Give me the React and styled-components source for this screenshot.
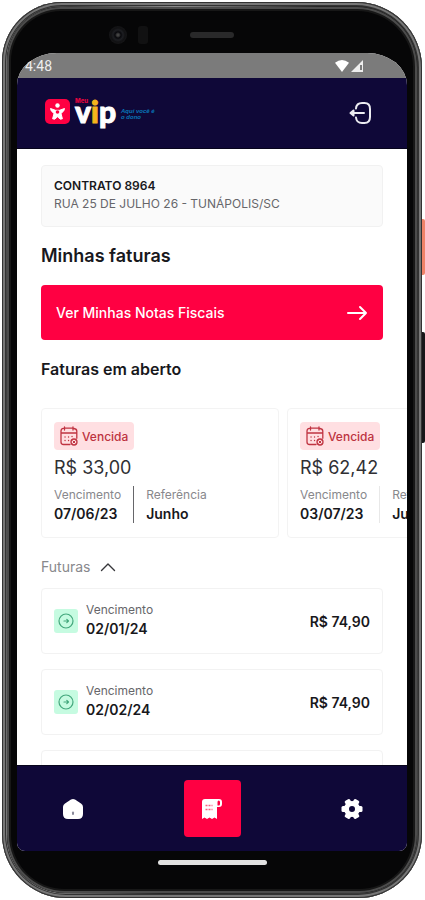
import React from "react";
import styled, { createGlobalStyle } from "styled-components";

const Global = createGlobalStyle`
  *, *::before, *::after { box-sizing: border-box; }
  body { margin: 0; background: #fff; font-family: Inter, "Liberation Sans", sans-serif; color: #18181c; }
  button { font: inherit; color: inherit; border: 0; padding: 0; background: none; cursor: pointer; }
  h1, h2, p, dl, dd, dt, ul { margin: 0; padding: 0; }
  svg { display: block; flex: none; }
`;

const Stage = styled.main`
  position: relative;
  height: 100vh;
  padding: 2px 3px 2px 2px;
`;

const SideKey = styled.span`
  position: absolute;
  right: 0;
  top: ${(p) => p.$top}px;
  width: 6px;
  height: ${(p) => p.$length}px;
  border-radius: 2px;
  background: ${(p) => p.$color};
`;

const Shell = styled.div`
  position: relative;
  height: 100%;
  padding: 5px;
  border-radius: 60px 66px 64px 64px;
  background: linear-gradient(100deg, #777 0, #3a3a3a 12%, #8a8a8a 30%, #252525 55%, #333 80%, #444 100%);
  box-shadow: inset 0 0 0 1px #333, inset 0 0 0 3px #777, inset 0 0 0 4px #333;
`;

const Bezel = styled.div`
  display: flex;
  flex-direction: column;
  height: 100%;
  padding: 0 8px;
  border-radius: 54px 60px 58px 58px;
  background: #060607;
  box-shadow: inset 0 0 0 2px #4c4c4c, inset 0 0 0 4px #171717;
`;

const TopBezel = styled.div`
  display: grid;
  grid-template-columns: 1fr 44px 1fr;
  align-items: center;
  height: 46px;
  flex: none;
  padding-top: 10px;
`;

const Sensors = styled.div`
  display: flex;
  justify-content: flex-end;
  gap: 11px;
  padding-right: 42px;
`;

const Camera = styled.span`
  width: 18px;
  height: 18px;
  border-radius: 50%;
  background: radial-gradient(circle, #444 0 1px, #08080c 3px, #1d1e22 5px, #111113 7px, #151517 9px);
`;

const Proximity = styled.span`
  width: 10px;
  height: 18px;
  border-radius: 3px;
  background: #111112;
`;

const Speaker = styled.span`
  height: 6px;
  border-radius: 3px;
  background: #29292a;
`;

const Screen = styled.div`
  display: flex;
  flex-direction: column;
  flex: 1;
  min-height: 0;
  margin: 0 2px;
  overflow: hidden;
  border-radius: 40px 40px 8px 8px / 32px 32px 8px 8px;
  background: #fff;
`;

const StatusBar = styled.div`
  display: flex;
  align-items: center;
  justify-content: space-between;
  flex: none;
  height: 25px;
  padding: 0 42px 0 8px;
  background: #7b7b7b;
  color: #eee;
  font: 14px/24px Roboto, sans-serif;
`;

const AppHeader = styled.header`
  display: flex;
  align-items: center;
  justify-content: space-between;
  flex: none;
  height: 71px;
  padding: 0 34px 0 28px;
  background: #0f0838;
  border-bottom: 1px solid #07041c;
`;

const Content = styled.div`
  flex: 1;
  min-height: 0;
  padding: 16px 24px 0 24px;
  overflow: hidden;
`;

const Contract = styled.section`
  padding: 11px 12px 13px;
  border: 1px solid #f1f1f1;
  border-radius: 4px;
  background: #fafafa;
  font-size: 12px;
  line-height: 18px;
  color: #66666a;
`;

const ContractTitle = styled.p`
  font-weight: 600;
  color: #18181c;
`;

const PageTitle = styled.h1`
  margin-top: 18px;
  font-size: 18px;
  line-height: 22px;
  font-weight: 600;
`;

const SectionTitle = styled.h2`
  margin-top: 19px;
  font-size: 16px;
  line-height: 20px;
  font-weight: 600;
`;

const NotesButton = styled.button`
  display: flex;
  align-items: center;
  justify-content: space-between;
  width: 100%;
  height: 55px;
  margin-top: 18px;
  padding: 0 15px;
  border-radius: 4px;
  background: #ff0042;
  color: #fff;
  font-size: 14px;
  font-weight: 500;
`;

const OpenBills = styled.div`
  display: flex;
  gap: 8px;
  margin: 29px -24px 0 0;
  overflow: hidden;
`;

const BillCard = styled.article`
  flex: none;
  width: 238px;
  padding: 13px 12px 14px;
  border: 1px solid #f3f3f3;
  border-radius: 4px;
`;

const OverdueTag = styled.span`
  display: flex;
  width: fit-content;
  align-items: center;
  gap: 4px;
  height: 28px;
  padding: 0 6px;
  border-radius: 4px;
  background: #ffdfe2;
  color: #bd3340;
  font-size: 12px;
  font-weight: 500;
`;

const Amount = styled.p`
  margin-top: 6px;
  font-size: 18px;
  line-height: 24px;
  color: #303034;
`;

const Facts = styled.dl`
  display: flex;
  margin-top: 6px;
`;

const Fact = styled.div`
  padding-right: 12px;
`;

const RuledFact = styled(Fact)`
  padding-left: 12px;
  border-left: 1px solid ${(p) => p.$rule};
`;

const Label = styled.dt`
  font-size: 12px;
  line-height: 18px;
  color: ${(p) => (p.$strong ? "#66666a" : "#88888c")};
`;

const Value = styled.dd`
  font-size: 14px;
  line-height: 19px;
  font-weight: 600;
`;

const FutureToggle = styled.button`
  display: flex;
  align-items: center;
  gap: 10px;
  margin-top: 19px;
  font-size: 14px;
  line-height: 20px;
  color: #88888c;
`;

const FutureList = styled.ul`
  display: grid;
  gap: 15px;
  margin-top: 11px;
  list-style: none;
`;

const FutureRow = styled.li`
  display: flex;
  align-items: center;
  gap: 8px;
  height: 66px;
  padding: 0 12px;
  border: 1px solid #f2f2f2;
  border-radius: 4px;
`;

const FutureFact = styled.dl`
  padding-bottom: 4px;
`;

const FutureIcon = styled.span`
  display: grid;
  place-items: center;
  width: 24px;
  height: 24px;
  border-radius: 3px;
  background: #c6fbe1;
`;

const FuturePrice = styled.span`
  margin-left: auto;
  font-size: 14px;
  font-weight: 600;
`;

const NavBar = styled.nav`
  display: flex;
  align-items: center;
  justify-content: space-between;
  flex: none;
  height: 86px;
  padding: 0 27px;
  background: #0f0838;
  border-top: 1px solid #07041c;
`;

const NavButton = styled.button`
  display: grid;
  place-items: center;
  width: 57px;
  height: 57px;
  border-radius: 4px;
  background: ${(p) => (p.$active ? "#ff0042" : "transparent")};
`;

const BottomBezel = styled.div`
  display: flex;
  justify-content: center;
  flex: none;
  height: 42px;
  padding-top: 9px;
`;

const HomeIndicator = styled.span`
  width: 109px;
  height: 5px;
  border-radius: 3px;
  background: #e2e2e2;
`;

const Logo = () => (
  <svg width="120" height="48" viewBox="0 -8 120 48" role="img" aria-label="Meu vip">
    <rect x="0" y="2" width="25" height="25" rx="5" fill="#ff0042" />
    <circle cx="12.5" cy="8.5" r="2.2" fill="#fff" />
    <path d="M5.500 11.500l5 1.800h4l5-1.800-.8 2.500-2.700 2.500 1.400 5.300-2 .4-2.900-2.400-2.900 2.400-2-.4 1.400-5.300-2.700-2.500z" fill="#fff" stroke="#fff" strokeWidth="1" strokeLinejoin="round" />
    <circle cx="12.500" cy="15" r="1.800" fill="#ff0042" />
    <g fontFamily="Lato, sans-serif" fontWeight="900" fontSize="30" strokeWidth="1">
      <text x="30" y="26" fill="#fff" stroke="#fff">v</text>
      <text x="46" y="26" fill="#f6b51c" stroke="#f6b51c">i</text>
      <text x="54" y="26" fill="#fff" stroke="#fff">p</text>
    </g>
    <text x="30" y="6" fontFamily="Inter, sans-serif" fontWeight="800" fontSize="6" fill="#e3063f">Meu</text>
    <g fontFamily="Liberation Sans, sans-serif" fontStyle="italic" fontWeight="700" fontSize="6" fill="#0877b9">
      <text x="76" y="16">Aqui você é</text>
      <text x="76" y="22">o dono</text>
    </g>
  </svg>
);

const Signal = () => (
  <svg width="31" height="14" viewBox="0 0 31 14" fill="#fff" aria-hidden="true">
    <path d="M1 3.800Q8 -1.800 15 3.800L8 13z" />
    <path d="M17 13L29 1v12z" fill="#eee" />
    <path d="M26 6h2v5h-2z" fill="#7b7b7b" />
  </svg>
);

const LogoutIcon = () => (
  <svg width="24" height="24" viewBox="0 0 24 24" fill="none" stroke="#ececf1" strokeWidth="2" strokeLinecap="round" strokeLinejoin="round" aria-hidden="true">
    <path d="M7 7.500Q7.500 2 13 2h2.500q5.500 0 5.500 6v8q0 6-5.500 6H13q-5.500 0-6-5.500M15 12H4" />
    <path d="M4.500 9.500L1.500 12l3 2.500z" fill="#ececf1" />
  </svg>
);

const ArrowIcon = () => (
  <svg width="22" height="18" viewBox="0 0 22 18" fill="none" stroke="#fff" strokeWidth="2" strokeLinecap="round" strokeLinejoin="round" aria-hidden="true">
    <path d="M2 9h18M14 3l6 6-6 6" />
  </svg>
);

const CalendarIcon = () => (
  <svg width="18" height="20" viewBox="0 0 18 20" fill="none" stroke="#c03442" strokeWidth="1.300" strokeLinecap="round" strokeLinejoin="round" aria-hidden="true">
    <path d="M4.500 1v3M13 1v3M5 2.200h7.500M3.500 2.400Q1 2.700 1 5v11q0 2.500 2.500 2.500H10M14 2.500q2.800.4 2.800 2.800v7M1 7h15.800" />
    <path d="M5 11h.1M8.500 11h.1M5 14.500h.1M8.500 14.500h.1M12 10.500h.1" />
    <circle cx="14" cy="16" r="3" />
    <path d="M12.800 14.800l2.400 2.400M15.200 14.800l-2.400 2.400" strokeWidth="1" />
  </svg>
);

const ChevronIcon = () => (
  <svg width="16" height="10" viewBox="0 0 16 10" fill="none" stroke="#36363a" strokeWidth="1.400" strokeLinecap="round" strokeLinejoin="round" aria-hidden="true">
    <path d="M1.500 8.500L8 2l6.500 6.500" />
  </svg>
);

const CircleArrowIcon = () => (
  <svg width="16" height="16" viewBox="0 0 16 16" fill="none" stroke="#43a77c" strokeWidth="1.200" strokeLinecap="round" strokeLinejoin="round" aria-hidden="true">
    <circle cx="8" cy="8" r="7" />
    <path d="M6 8h4.500M8.800 6.300L10.500 8 8.800 9.700" />
  </svg>
);

const HomeIcon = () => (
  <svg width="22" height="22" viewBox="0 0 22 22" aria-hidden="true">
    <path d="M9 1.500q2-1.200 4 0l6 4q2 1.300 2 3.500v7q0 5-5 5H6q-5 0-5-5V9q0-2.200 2-3.500z" fill="#fff" />
    <path d="M11 14.500v1.500" stroke="#8a899a" strokeWidth="2" strokeLinecap="round" />
  </svg>
);

const ReceiptIcon = () => (
  <svg width="22" height="22" viewBox="0 0 22 22" aria-hidden="true">
    <path d="M4 1h14q3 0 3 3v2q0 3-3 3h-2v12l-2.500-1.500L11 21l-2.500-1.500L6 21l-2.500-1.500L1 21V4q0-3 3-3z" fill="#fff" />
    <path d="M16.500 7.500V4q0-1.500 1.200-1.500T19 4v2q0 1.500-1.300 1.500z" fill="#ff0042" />
    <path d="M4.500 7.500h7M4.500 11.500h7" stroke="#ff5b83" strokeWidth="1.500" strokeDasharray="2 1" />
  </svg>
);

const GearIcon = () => (
  <svg width="22" height="22" viewBox="0 0 22 22" aria-hidden="true">
    <circle cx="11" cy="11" r="5.500" fill="none" stroke="#fff" strokeWidth="5" />
    {[0, 60, 120, 180, 240, 300].map((angle) => (
      <rect key={angle} x="17" y="8" width="4.500" height="6" rx="1.500" fill="#fff" transform={`rotate(${angle} 11 11)`} />
    ))}
  </svg>
);

const openBills = [
  { amount: "R$ 33,00", due: "07/06/23", month: "Junho", rule: "#66666a" },
  { amount: "R$ 62,42", due: "03/07/23", month: "Julho", rule: "#e8e8e8" },
];

const futureBills = [
  { due: "02/01/24", amount: "R$ 74,90" },
  { due: "02/02/24", amount: "R$ 74,90" },
  { due: "02/03/24", amount: "R$ 74,90" },
];

export default function App() {
  return (
    <>
      <Global />
      <Stage>
        <SideKey $top={219} $length={56} $color="#ef8268" />
        <SideKey $top={332} $length={111} $color="#171719" />
        <Shell>
          <Bezel>
            <TopBezel>
              <Sensors><Camera /><Proximity /></Sensors>
              <Speaker />
            </TopBezel>
            <Screen>
              <StatusBar><span>4:48</span><Signal /></StatusBar>
              <AppHeader>
                <Logo />
                <button type="button" aria-label="Sair"><LogoutIcon /></button>
              </AppHeader>
              <Content>
                <Contract>
                  <ContractTitle>CONTRATO 8964</ContractTitle>
                  <p>RUA 25 DE JULHO 26 - TUNÁPOLIS/SC</p>
                </Contract>
                <PageTitle>Minhas faturas</PageTitle>
                <NotesButton type="button">Ver Minhas Notas Fiscais<ArrowIcon /></NotesButton>
                <SectionTitle>Faturas em aberto</SectionTitle>
                <OpenBills>
                  {openBills.map((bill) => (
                    <BillCard key={bill.due}>
                      <OverdueTag><CalendarIcon />Vencida</OverdueTag>
                      <Amount>{bill.amount}</Amount>
                      <Facts>
                        <Fact><Label>Vencimento</Label><Value>{bill.due}</Value></Fact>
                        <RuledFact $rule={bill.rule}><Label>Referência</Label><Value>{bill.month}</Value></RuledFact>
                      </Facts>
                    </BillCard>
                  ))}
                </OpenBills>
                <FutureToggle type="button" aria-expanded="true">Futuras<ChevronIcon /></FutureToggle>
                <FutureList>
                  {futureBills.map((bill) => (
                    <FutureRow key={bill.due}>
                      <FutureIcon><CircleArrowIcon /></FutureIcon>
                      <FutureFact><Label $strong>Vencimento</Label><Value>{bill.due}</Value></FutureFact>
                      <FuturePrice>{bill.amount}</FuturePrice>
                    </FutureRow>
                  ))}
                </FutureList>
              </Content>
              <NavBar aria-label="Principal">
                <NavButton type="button" aria-label="Início"><HomeIcon /></NavButton>
                <NavButton type="button" aria-label="Faturas" $active><ReceiptIcon /></NavButton>
                <NavButton type="button" aria-label="Configurações"><GearIcon /></NavButton>
              </NavBar>
            </Screen>
            <BottomBezel><HomeIndicator /></BottomBezel>
          </Bezel>
        </Shell>
      </Stage>
    </>
  );
}
